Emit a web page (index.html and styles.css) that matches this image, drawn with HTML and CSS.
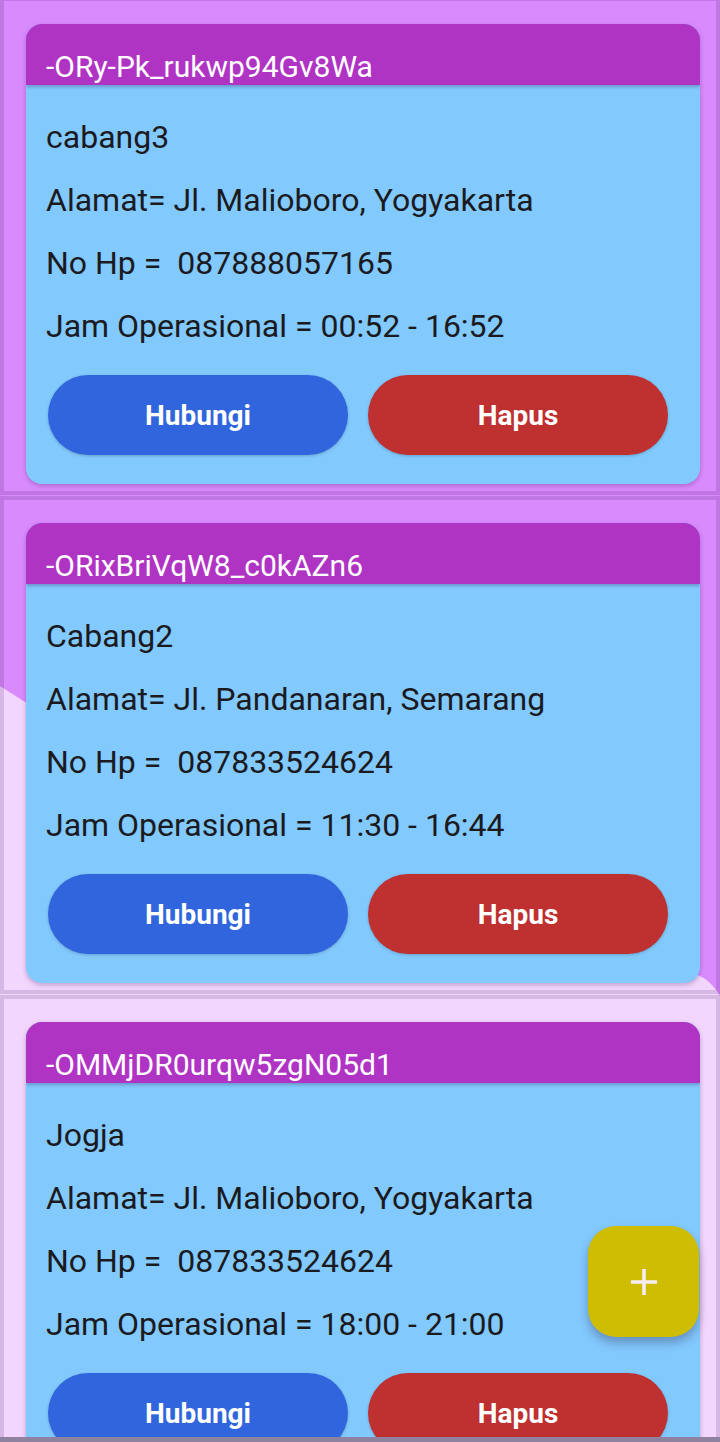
FILE: index.html
```html
<!DOCTYPE html>
<html lang="id">
<head>
<meta charset="utf-8">
<title>Cabang</title>
<link rel="stylesheet" href="styles.css">
</head>
<body>
<div class="backdrop" aria-hidden="true">
  <svg viewBox="0 0 720 1442" width="720" height="1442" preserveAspectRatio="none">
    <path d="M0 0 H720 V996 Q712 982 700 976 Q660 960 600 950 L120 760 Q40 712 0 686 Z" fill="#d98bfd"/>
  </svg>
</div>
<main class="list">
  <section class="item">
    <article class="card">
      <header class="card-head">-ORy-Pk_rukwp94Gv8Wa</header>
      <div class="card-body">
        <p class="line">cabang3</p>
        <p class="line">Alamat= Jl. Malioboro, Yogyakarta</p>
        <p class="line">No Hp =&nbsp; 087888057165</p>
        <p class="line">Jam Operasional = 00:52 - 16:52</p>
        <div class="actions">
          <button class="btn btn-call">Hubungi</button>
          <button class="btn btn-del">Hapus</button>
        </div>
      </div>
    </article>
  </section>
  <section class="item">
    <article class="card">
      <header class="card-head">-ORixBriVqW8_c0kAZn6</header>
      <div class="card-body">
        <p class="line">Cabang2</p>
        <p class="line">Alamat= Jl. Pandanaran, Semarang</p>
        <p class="line">No Hp =&nbsp; 087833524624</p>
        <p class="line">Jam Operasional = 11:30 - 16:44</p>
        <div class="actions">
          <button class="btn btn-call">Hubungi</button>
          <button class="btn btn-del">Hapus</button>
        </div>
      </div>
    </article>
  </section>
  <section class="item">
    <article class="card">
      <header class="card-head">-OMMjDR0urqw5zgN05d1</header>
      <div class="card-body">
        <p class="line">Jogja</p>
        <p class="line">Alamat= Jl. Malioboro, Yogyakarta</p>
        <p class="line">No Hp =&nbsp; 087833524624</p>
        <p class="line">Jam Operasional = 18:00 - 21:00</p>
        <div class="actions">
          <button class="btn btn-call">Hubungi</button>
          <button class="btn btn-del">Hapus</button>
        </div>
      </div>
    </article>
  </section>
</main>
<button class="fab" aria-label="Tambah">
  <svg viewBox="0 0 32 32" width="32" height="32"><path d="M16 3 V29 M3 16 H29" stroke="#f6ecf2" stroke-width="3.6" fill="none"/></svg>
</button>
<div class="bottom-edge"></div>
</body>
</html>
```
FILE: styles.css
```css
* { box-sizing: border-box; }
html, body {
  margin: 0;
  padding: 0;
}
body {
  width: 720px;
  height: 1442px;
  overflow: hidden;
  position: relative;
  background: #f2d6fd;
  font-family: Roboto, "Noto Sans", "Liberation Sans", sans-serif;
  color: #1b1b1f;
}
.backdrop {
  position: absolute;
  left: 0;
  top: 0;
  width: 720px;
  height: 1442px;
  z-index: 0;
}
.backdrop svg { display: block; }
.list {
  position: relative;
  z-index: 1;
  display: flex;
  flex-direction: column;
  gap: 9px;
  padding: 1px 4px 0;
}
.item {
  padding: 23px 16px 7px 22px;
  box-shadow: 0 0 0 4px rgba(60, 10, 80, 0.15);
}
.card {
  height: 460px;
  border-radius: 16px;
  overflow: hidden;
  background: #82c9fd;
  box-shadow: 0 2px 5px rgba(40, 0, 60, 0.25);
  display: flex;
  flex-direction: column;
}
.card-head {
  height: 61px;
  background: #b034c4;
  color: #ffffff;
  font-size: 30px;
  line-height: 34px;
  padding: 26px 20px 0;
  white-space: nowrap;
  box-shadow: 0 2px 3px rgba(40, 0, 60, 0.25);
  position: relative;
  z-index: 1;
}
.card-body {
  padding: 21px 0 0 20px;
  display: flex;
  flex-direction: column;
}
.line {
  margin: 0;
  height: 63px;
  line-height: 63px;
  font-size: 32px;
  white-space: nowrap;
}
.actions {
  display: flex;
  gap: 20px;
  margin-top: 17px;
  padding-left: 2px;
}
.btn {
  width: 300px;
  height: 80px;
  border: 0;
  border-radius: 40px;
  color: #ffffff;
  font-family: Roboto, "Noto Sans", "Liberation Sans", sans-serif;
  font-size: 28px;
  font-weight: 700;
  box-shadow: 0 1px 3px rgba(0, 0, 0, 0.2);
}
.btn-call { background: #3065de; }
.btn-del { background: #bf3030; }
.fab {
  position: absolute;
  left: 588px;
  top: 1226px;
  width: 111px;
  height: 111px;
  border: 0;
  border-radius: 28px;
  background: #cebd03;
  box-shadow: 0 6px 10px rgba(40, 20, 60, 0.3);
  display: flex;
  align-items: center;
  justify-content: center;
  z-index: 2;
}
.fab svg { display: block; }
.bottom-edge {
  position: absolute;
  left: 0;
  bottom: 0;
  width: 720px;
  height: 5px;
  background: #8f82a0;
  z-index: 3;
}
```
